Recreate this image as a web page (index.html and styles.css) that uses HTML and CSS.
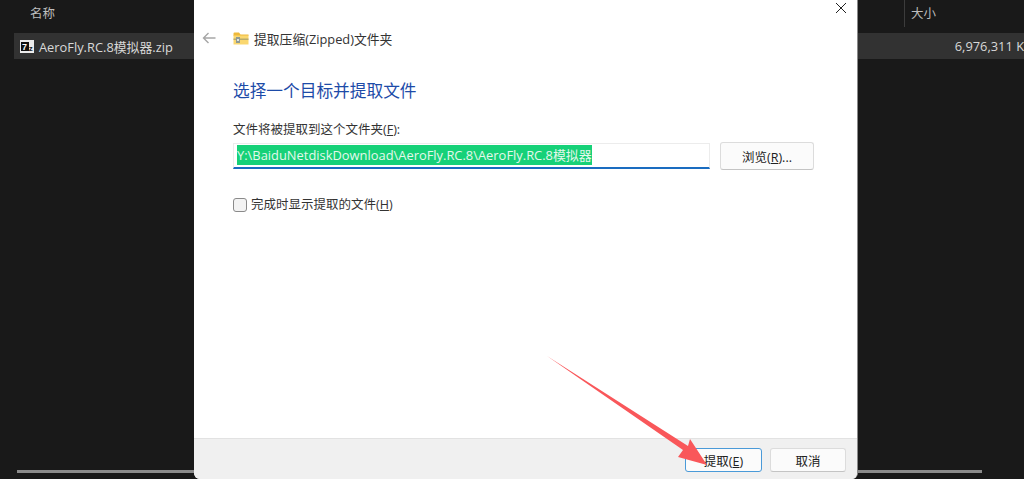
FILE: index.html
```html
<!DOCTYPE html>
<html lang="zh">
<head>
<meta charset="utf-8">
<title>提取压缩(Zipped)文件夹</title>
<link rel="stylesheet" href="styles.css">
</head>
<body>
<div class="explorer">
  <div class="head-row">
    <span class="col-name">名称</span>
    <span class="col-size">大小</span>
  </div>
  <div class="file-row">
    <svg class="zip-icon" width="14" height="13" viewBox="0 0 14 13">
      <rect x="0" y="0" width="14" height="13" fill="#ececec"/>
      <rect x="1" y="2" width="8" height="9" fill="#111"/>
      <text x="2" y="10" class="zip-seven">7</text>
      <text x="8.7" y="10.5" class="zip-z">z</text>
    </svg>
    <span class="file-name">AeroFly.RC.8模拟器.zip</span>
    <span class="file-size">6,976,311 K</span>
  </div>
  <div class="h-scroll"></div>
</div>

<section class="dialog">
  <button class="close" aria-label="关闭">
    <svg width="12" height="12" viewBox="0 0 12 12"><path d="M1 1L11 11M11 1L1 11" stroke="#222" stroke-width="1" fill="none"/></svg>
  </button>
  <header class="wizard-head">
    <svg class="back" width="14" height="12" viewBox="0 0 14 12"><path d="M13.5 6H1.5M6.5 1L1.5 6L6.5 11" stroke="#a6a6a6" stroke-width="1.4" fill="none"/></svg>
    <svg class="folder" width="16" height="13" viewBox="0 0 16 13">
      <path d="M0.5 1.5Q0.5 0.5 1.5 0.5H6L7.5 2.5H15.5V4H0.5Z" fill="#efb93a"/>
      <path d="M0.5 3.5H15.5V12.5H0.5Z" fill="#fad76f"/>
      <path d="M0.5 6.5H15.5V8H0.5Z" fill="#b9ab6c"/>
      <rect x="3" y="5" width="4" height="6" fill="#8f9a94"/>
      <rect x="4" y="7" width="2" height="2" fill="#dfe3df"/>
    </svg>
    <span class="wizard-title">提取压缩(Zipped)文件夹</span>
  </header>
  <main class="wizard-body">
    <h1 class="heading">选择一个目标并提取文件</h1>
    <div class="label">文件将被提取到这个文件夹(<u>F</u>):</div>
    <div class="path-row">
      <div class="path-input"><span class="selection">Y:\BaiduNetdiskDownload\AeroFly.RC.8\AeroFly.RC.8模拟器</span></div>
      <button class="btn browse">浏览(<u>R</u>)...</button>
    </div>
    <label class="check-row"><span class="checkbox"></span><span>完成时显示提取的文件(<u>H</u>)</span></label>
  </main>
  <footer class="wizard-foot">
    <button class="btn foot-btn primary">提取(<u>E</u>)</button>
    <button class="btn foot-btn cancel">取消</button>
  </footer>
</section>

<svg class="arrow" width="170" height="120" viewBox="0 0 170 120">
  <polygon points="0,0 141,90 143,83 160,109 131,101 136,94" fill="#f9575a"/>
</svg>
</body>
</html>
```

FILE: styles.css
```css
* { box-sizing: border-box; }
html, body { margin: 0; height: 100%; }
body {
  position: relative;
  width: 1024px;
  height: 479px;
  overflow: hidden;
  background: #191919;
  font-family: "Open Sans", "Noto Sans CJK SC", sans-serif;
  font-size: 12.5px;
}
.explorer {
  display: flex;
  flex-direction: column;
  height: 479px;
  color: #d8d8d8;
}
.head-row {
  display: flex;
  height: 33px;
  flex: none;
  align-items: flex-start;
  padding: 4px 0 0 30px;
  color: #bdbdbd;
}
.col-name { line-height: 20px; }
.col-size {
  margin-left: 849px;
  margin-top: -4px;
  padding: 4px 0 0 6px;
  height: 27px;
  line-height: 20px;
  border-left: 1px solid #3c3c3c;
}
.file-row {
  display: flex;
  align-items: center;
  flex: none;
  height: 26px;
  margin-left: 14px;
  padding-left: 6px;
  background: #323232;
  font-size: 12.85px;
  white-space: nowrap;
  overflow: hidden;
}
.zip-icon { flex: none; }
.zip-seven { font: bold 9px "Liberation Sans", sans-serif; fill: #fff; }
.zip-z { font: bold 8px "Liberation Sans", sans-serif; fill: #222; }
.file-name { margin-left: 5px; }
.file-size { margin-left: 782px; }
.h-scroll {
  margin-top: auto;
  margin-bottom: 6px;
  margin-left: 17px;
  width: 965px;
  height: 3px;
  flex: none;
  background: #8b8b8b;
}
.dialog {
  position: absolute;
  left: 194px;
  top: 0;
  width: 664px;
  height: 479px;
  display: flex;
  flex-direction: column;
  background: #fff;
  color: #222;
  border-right: 1px solid #8a8a8a;
  border-radius: 0 0 6px 6px;
  overflow: hidden;
}
.close {
  position: absolute;
  right: 10px;
  top: 2px;
  padding: 0;
  border: 0;
  background: none;
  line-height: 0;
}
.wizard-head {
  display: flex;
  align-items: center;
  flex: none;
  height: 26px;
  margin-top: 25px;
  padding-left: 8px;
}
.back { flex: none; }
.folder { flex: none; margin-left: 17px; }
.wizard-title { margin-left: 5px; font-size: 12.8px; color: #333; }
.wizard-body {
  flex: 1;
  display: flex;
  flex-direction: column;
  align-items: flex-start;
  padding: 28px 43px 0 39px;
}
.heading {
  margin: 0;
  font-size: 16.7px;
  line-height: 24px;
  font-weight: 400;
  color: #1d4ba8;
}
.label {
  margin-top: 18px;
  line-height: 18px;
  color: #333;
}
.path-row {
  display: flex;
  align-items: center;
  gap: 10px;
  margin-top: 3px;
  align-self: stretch;
}
.path-input {
  flex: 1;
  height: 26px;
  padding: 1px 3px 0;
  border: 1px solid #ececec;
  border-bottom: 2px solid #1a6cc0;
  white-space: nowrap;
  overflow: hidden;
}
.selection {
  display: inline-block;
  height: 20px;
  line-height: 20px;
  background: #16d178;
  color: #e4f8ec;
  font-size: 12.9px;
  vertical-align: top;
}
.btn {
  font: inherit;
  color: #222;
  background: #fbfbfb;
  border: 1px solid #dcdcdc;
  border-bottom-color: #c4c4c4;
  border-radius: 3px;
  padding: 0;
}
.browse { flex: none; width: 94px; height: 28px; }
.check-row {
  display: flex;
  align-items: center;
  gap: 4px;
  margin-top: 26px;
  line-height: 18px;
  color: #333;
}
.checkbox {
  width: 14px;
  height: 14px;
  background: #f3f3f3;
  border: 1px solid #8a8a8a;
  border-radius: 3px;
}
.wizard-foot {
  flex: none;
  height: 41px;
  display: flex;
  justify-content: flex-end;
  align-items: flex-start;
  gap: 8px;
  padding: 9px 11px 0 0;
  background: #f0f0f0;
  border-top: 1px solid #e2e2e2;
}
.foot-btn { width: 77px; height: 24px; }
.cancel { width: 76px; }
.primary { border: 1px solid #4a9ad8; }
.arrow {
  position: absolute;
  left: 547px;
  top: 356px;
}
```
